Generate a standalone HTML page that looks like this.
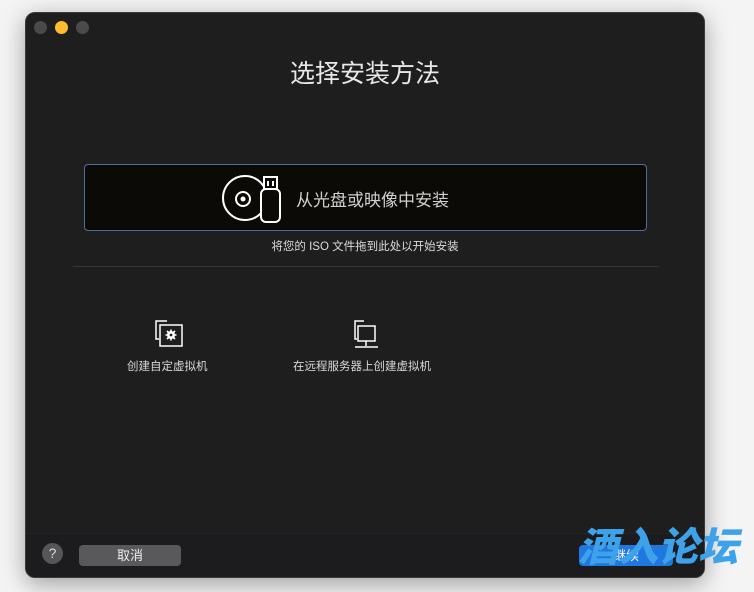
<!DOCTYPE html>
<html><head><meta charset="utf-8">
<style>
html,body{margin:0;padding:0;width:754px;height:592px;overflow:hidden;background:#f4f4f4;font-family:"Liberation Sans","Noto Sans CJK SC",sans-serif;}
.win{position:absolute;left:25px;top:12px;width:680px;height:566px;background:#1e1e1f;border-radius:10px;box-shadow:0 6px 24px rgba(0,0,0,.35);border:1px solid #3a3a3a;box-sizing:border-box;overflow:hidden;}
.dot{position:absolute;top:8px;width:13px;height:13px;border-radius:50%;background:#4a4a4c;}
.title{position:absolute;left:0;width:100%;top:41px;text-align:center;color:#e8e8e8;font-size:25px;}
.box{position:absolute;left:58px;top:151px;width:563px;height:67px;background:#0b0a06;border:1px solid #4f6e9e;border-radius:4px;box-sizing:border-box;}
.boxt{position:absolute;left:211px;top:21px;color:#d0d0d0;font-size:17px;}
.hint{position:absolute;left:0;width:100%;top:225px;text-align:center;color:#dcdcdc;font-size:11.5px;}
.sep{position:absolute;left:47px;top:253px;width:586px;height:1px;background:#353535;}
.lbl{position:absolute;color:#d8d8d8;font-size:11.5px;}
.bottom{position:absolute;left:0;top:520px;width:100%;height:46px;background:#1c1c1e;border-top:1px solid #242424;}
.help{position:absolute;left:16px;top:9px;width:21px;height:21px;border-radius:50%;background:#565658;color:#ddd;font-size:14px;text-align:center;line-height:21px;}
.cancel{position:absolute;left:53px;top:11px;width:102px;height:21px;border-radius:4px;background:#59595b;color:#eee;font-size:13px;text-align:center;line-height:21px;}
.cont{position:absolute;left:553px;top:11px;width:94px;height:21px;border-radius:4px;background:#1f78e0;color:#fff;font-size:13px;text-align:center;line-height:21px;}
.wm{position:absolute;left:578px;top:524px;color:#3ea2ea;font-size:40px;font-weight:900;font-style:italic;letter-spacing:0px;line-height:48px;}
</style></head><body>
<div class="win">
<div class="dot" style="left:8px"></div>
<div class="dot" style="left:29px;background:#febc2e"></div>
<div class="dot" style="left:50px"></div>
<div class="title">选择安装方法</div>
<div class="box">
<svg style="position:absolute;left:136px;top:8px" width="62" height="52" viewBox="0 0 62 52">
<circle cx="24" cy="25" r="22" fill="none" stroke="#fff" stroke-width="2"/>
<circle cx="22" cy="26" r="7" fill="none" stroke="#fff" stroke-width="2"/>
<circle cx="22" cy="26" r="2.5" fill="#fff"/>
<rect x="40" y="16" width="19" height="33" rx="5" fill="#0b0a06" stroke="#fff" stroke-width="2"/>
<rect x="43" y="4" width="13" height="12" fill="#0b0a06" stroke="#fff" stroke-width="2"/>
<rect x="46" y="8" width="2" height="5" fill="#fff"/><rect x="51" y="8" width="2" height="5" fill="#fff"/>
</svg>
<div class="boxt">从光盘或映像中安装</div>
</div>
<div class="hint">将您的 ISO 文件拖到此处以开始安装</div>
<div class="sep"></div>
<svg style="position:absolute;left:129px;top:306px" width="30" height="30" viewBox="0 0 30 30">
<path d="M12 2 H1 V20 H4" fill="none" stroke="#fff" stroke-width="1.5"/>
<rect x="5" y="6" width="22" height="21" fill="none" stroke="#fff" stroke-width="1.5"/>
<circle cx="16" cy="16" r="4" fill="#fff"/>
<path d="M16 10.5V21.5M10.5 16H21.5M12 12L20 20M20 12L12 20" stroke="#fff" stroke-width="1.6"/>
<circle cx="16" cy="16" r="1.4" fill="#1e1e1f"/>
</svg>
<div class="lbl" style="left:101px;top:345px">创建自定虚拟机</div>
<svg style="position:absolute;left:327px;top:306px" width="26" height="30" viewBox="0 0 26 30">
<path d="M11 2 H2 V20 H4" fill="none" stroke="#fff" stroke-width="1.5"/>
<rect x="5" y="7" width="17" height="15" fill="none" stroke="#fff" stroke-width="1.5"/>
<path d="M13 22V27M2 28H25" stroke="#fff" stroke-width="1.5"/>
</svg>
<div class="lbl" style="left:267px;top:345px">在远程服务器上创建虚拟机</div>
<div class="bottom">
<div class="help">?</div>
<div class="cancel">取消</div>
<div class="cont">继续</div>
</div>
</div>
<div class="wm">酒入论坛</div>
</body></html>
